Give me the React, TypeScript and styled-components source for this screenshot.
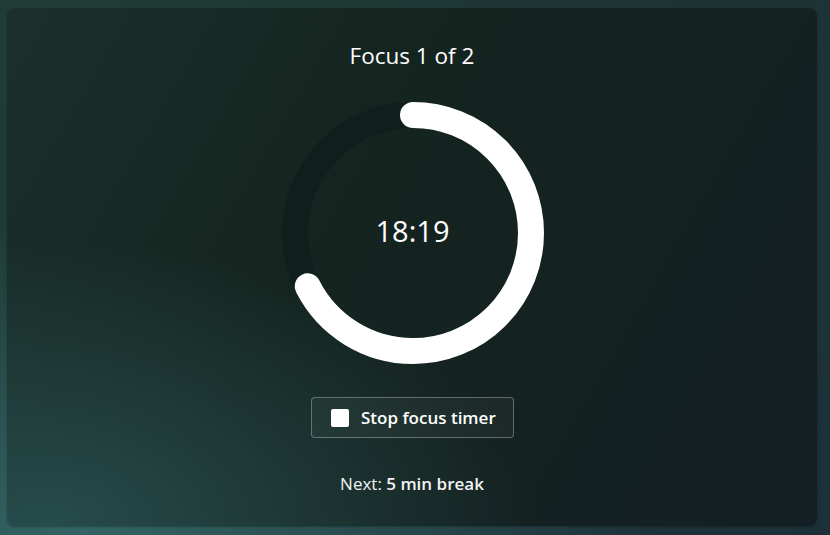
import React from "react";
import styled, { createGlobalStyle } from "styled-components";

const Global = createGlobalStyle`
  html, body { margin: 0; padding: 0; }
  body {
    width: 830px;
    height: 535px;
    overflow: hidden;
    font-family: "Open Sans", "Noto Sans", sans-serif;
    background:
      radial-gradient(ellipse 70% 60% at 10% 100%, #346465 0%, rgba(52,100,101,0) 100%),
      linear-gradient(135deg, #1f3d35 0%, #1d3434 50%, #1d3038 100%);
  }
`;

const Page = styled.div`
  box-sizing: border-box;
  width: 830px;
  height: 535px;
  padding: 8px 13px 9px 7px;
  display: flex;
`;

const Card = styled.main`
  flex: 1;
  border-radius: 8px;
  display: flex;
  flex-direction: column;
  align-items: center;
  color: #ffffff;
  background:
    radial-gradient(ellipse 60% 55% at 5% 100%, rgba(40,78,78,0.95) 0%, rgba(40,78,78,0) 100%),
    linear-gradient(120deg, #1b302b 0%, #14241f 40%, #141f24 100%);
  box-shadow: 0 1px 2px rgba(0,0,0,0.25);
`;

const Title = styled.h1`
  margin: 33px 0 0;
  font-size: 22.5px;
  font-weight: 400;
  line-height: 30px;
`;

const RingWrap = styled.div`
  position: relative;
  width: 262px;
  height: 262px;
  margin-top: 31px;
  margin-left: 1px;
`;

const RingSvg = styled.svg`
  display: block;
`;

const Time = styled.div`
  position: absolute;
  inset: 0 0 5px 0;
  display: flex;
  align-items: center;
  justify-content: center;
  font-size: 29px;
  font-weight: 400;
`;

const StopButton = styled.button`
  margin-top: 33px;
  margin-left: 1px;
  width: 203px;
  height: 41px;
  box-sizing: border-box;
  display: flex;
  align-items: center;
  gap: 12px;
  padding: 0 0 0 19px;
  border: 1px solid rgba(255,255,255,0.3);
  border-radius: 4px;
  background: rgba(255,255,255,0.04);
  color: #fff;
  font-family: "Open Sans", "Noto Sans", sans-serif;
  font-size: 17px;
  font-weight: 600;
`;

const StopIcon = styled.span`
  width: 18px;
  height: 18px;
  border-radius: 2px;
  background: #fff;
`;

const Next = styled.p`
  margin: 35px 0 0;
  font-size: 17px;
  line-height: 22px;
  color: #f2f2f2;
`;

const Bold = styled.strong`
  font-weight: 600;
`;

export default function App() {
  const size = 262;
  const stroke = 26;
  const r = (size - stroke) / 2;
  const c = 2 * Math.PI * r;
  const progress = 243 / 360;
  return (
    <>
      <Global />
      <Page>
        <Card>
          <Title>Focus 1 of 2</Title>
          <RingWrap>
            <RingSvg width={size} height={size} viewBox={`0 0 ${size} ${size}`}>
              <circle cx={size / 2} cy={size / 2} r={r} fill="none" stroke="#0f1f1d" strokeWidth={stroke} />
              <circle
                cx={size / 2}
                cy={size / 2}
                r={r}
                fill="none"
                stroke="#ffffff"
                strokeWidth={stroke}
                strokeLinecap="round"
                strokeDasharray={`${c * progress} ${c}`}
                transform={`rotate(-90 ${size / 2} ${size / 2})`}
              />
            </RingSvg>
            <Time>18:19</Time>
          </RingWrap>
          <StopButton>
            <StopIcon />
            Stop focus timer
          </StopButton>
          <Next>
            Next: <Bold>5 min break</Bold>
          </Next>
        </Card>
      </Page>
    </>
  );
}
